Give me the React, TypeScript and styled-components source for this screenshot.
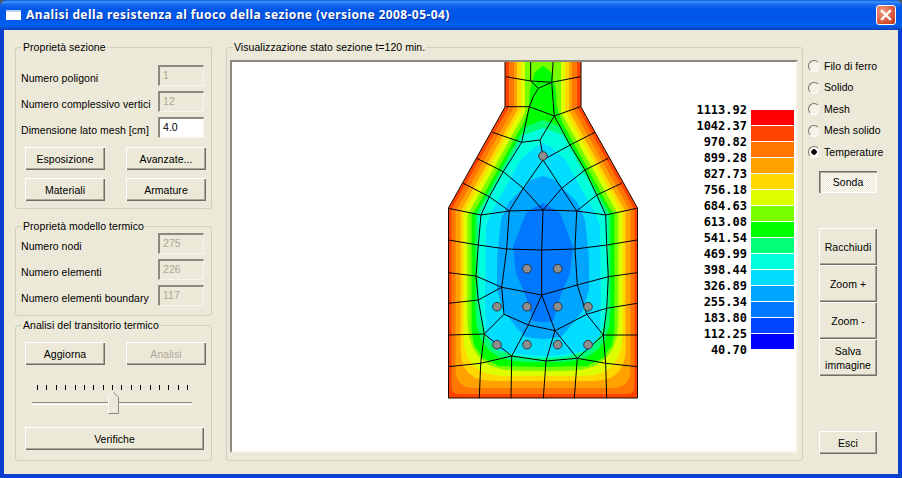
import React from "react";
import styled, { createGlobalStyle } from "styled-components";

const Global = createGlobalStyle`
  html, body { margin: 0; padding: 0; background: #4c5a6c; }
  #root { width: 902px; height: 478px; overflow: hidden; }
  * { box-sizing: border-box; }
`;

const UI_FONT = `"Liberation Sans", Arial, sans-serif`;

const Win = styled.div`
  width: 902px;
  height: 478px;
  display: flex;
  flex-direction: column;
  font: 10.5px/13px ${UI_FONT};
  letter-spacing: 0.05px;
  color: #000;
  background: #0a3fd0;
  border-radius: 7px 7px 0 0;
  overflow: hidden;
`;
const TitleBar = styled.div`
  height: 30px;
  flex: none;
  display: flex;
  align-items: center;
  padding: 0 6px 0 6px;
  background: linear-gradient(180deg, #0a5ae0 0, #3f95fb 2px, #1a6cf0 4px, #0058e8 9px, #0055e5 18px, #0060f0 25px, #0a4fd8 28px, #0a3cbc 30px);
`;
const TitleIcon = styled.div`
  width: 15px;
  height: 10px;
  background: #fff;
  border-top: 2px solid #bcd0f5;
  margin-right: 5px;
  flex: none;
`;
const TitleText = styled.div`
  flex: 1;
  font: bold 12px/16px "Noto Sans", "Liberation Sans", Arial, sans-serif;
  color: #fff;
  text-shadow: 1px 1px 0 #0a2f9c;
  letter-spacing: 0.4px;
  white-space: nowrap;
`;
const CloseBtn = styled.button`
  width: 20px;
  height: 20px;
  padding: 0;
  display: flex;
  align-items: center;
  justify-content: center;
  border: 1px solid #fff;
  border-radius: 3px;
  background: radial-gradient(circle at 30% 30%, #f0a080, #d8583a 60%, #b83010);
`;
const Body = styled.div`
  flex: 1;
  display: flex;
  background: #ece9d8;
  margin: 0 4px 4px 4px;
  padding: 17px 0 0 11px;
`;
const LeftCol = styled.div`
  width: 197px;
  flex: none;
  display: flex;
  flex-direction: column;
`;
const Group = styled.div<{ $h: number; $mt?: number; $pt: number }>`
  position: relative;
  height: ${(p) => p.$h}px;
  margin-top: ${(p) => p.$mt ?? 0}px;
  padding: ${(p) => p.$pt}px 7px 0 5px;
  border: 1px solid #d0d0bf;
  border-radius: 3px;
`;
const GroupTitle = styled.span`
  position: absolute;
  left: 6px;
  top: -7px;
  padding: 0 1px;
  background: #ece9d8;
  white-space: nowrap;
`;
const FieldRow = styled.div`
  display: flex;
  justify-content: space-between;
  height: 21px;
  margin-bottom: 5px;
`;
const FieldLabel = styled.label`
  padding-top: 7px;
  white-space: nowrap;
`;
const Field = styled.input`
  width: 46px;
  height: 21px;
  padding: 0 3px 3px 3px;
  font: 10.5px ${UI_FONT};
  letter-spacing: 0.05px;
  border: 1px solid;
  border-width: 2px 1px 1px 2px;
  border-color: #8c8a7e #f8f6ec #f8f6ec #8c8a7e;
  background: #fff;
  color: #000;
  outline: none;
  &:disabled {
    background: #ece9d8;
    color: #aca899;
    -webkit-text-fill-color: #aca899;
    opacity: 1;
  }
`;
const ButtonRow = styled.div<{ $mt: number }>`
  display: flex;
  gap: 21px;
  margin: ${(p) => p.$mt}px -3px 0 4px;
`;
const Btn = styled.button<{ $w: number; $h: number }>`
  width: ${(p) => p.$w}px;
  height: ${(p) => p.$h}px;
  flex: none;
  padding: 0;
  font: 10.5px/14px ${UI_FONT};
  letter-spacing: 0.05px;
  color: #000;
  background: #ece9d8;
  border: none;
  box-shadow: inset 1px 1px 0 #fff, inset -1px -1px 0 #716f64, inset -2px -2px 0 #aca899;
  &:disabled {
    color: #aca899;
  }
`;
const PressedBtn = styled(Btn)`
  background: repeating-conic-gradient(#ece9d8 0 25%, #fbfaf4 0 50%) 0 0 / 2px 2px;
  box-shadow: inset 1px 1px 0 #716f64, inset 2px 2px 0 #aca899, inset -1px -1px 0 #fff;
`;
const SliderBox = styled.div`
  position: relative;
  height: 33px;
  margin: 20px 0 0 11px;
  width: 160px;
`;
const Ticks = styled.div`
  display: flex;
  justify-content: space-between;
  padding: 0 4px 0 5px;
  height: 5px;
`;
const Tick = styled.i`
  width: 1px;
  height: 5px;
  background: #000;
`;
const Track = styled.div`
  position: absolute;
  left: 0;
  right: 0;
  top: 17px;
  height: 3px;
  background: #f4f2e6;
  border-top: 1px solid #8c8a7e;
  border-bottom: 1px solid #fff;
`;
const Thumb = styled.svg`
  position: absolute;
  left: 76px;
  top: 7px;
`;
const WideBtnWrap = styled.div`
  margin: 9px 0 0 4px;
`;
const MainGroup = styled.div`
  position: relative;
  width: 577px;
  height: 414px;
  margin-left: 14px;
  padding: 12px 3px 0 3px;
  border: 1px solid #d0d0bf;
  border-radius: 3px;
  flex: none;
`;
const Canvas = styled.div`
  width: 568px;
  height: 393px;
  display: flex;
  background: #fff;
  border: 2px solid;
  border-color: #8c8a7e #f4f2e6 #f4f2e6 #8c8a7e;
  overflow: hidden;
`;
const Section = styled.svg`
  flex: none;
  display: block;
`;
const Legend = styled.div`
  display: flex;
  gap: 4px;
  flex: none;
`;
const LegendLabels = styled.div`
  width: 57px;
  margin-top: 40px;
  text-align: right;
`;
const LegendLabel = styled.div`
  height: 16px;
  font: bold 12px/16px "DejaVu Sans Mono", "Liberation Mono", monospace;
  letter-spacing: 0;
`;
const LegendBars = styled.div`
  width: 43px;
  margin-top: 48px;
`;
const LegendBar = styled.div<{ $c: string }>`
  height: 15px;
  margin-bottom: 1px;
  background: ${(p) => p.$c};
`;
const RightCol = styled.div`
  flex: none;
  margin-left: 5px;
  width: 84px;
  display: flex;
  flex-direction: column;
  padding-top: 8.5px;
`;
const RadioRow = styled.div`
  height: 21.5px;
  display: flex;
  align-items: center;
  gap: 4px;
  white-space: nowrap;
`;
const RadioDot = styled.span<{ $on?: boolean }>`
  width: 12px;
  height: 12px;
  flex: none;
  border-radius: 50%;
  border: 1px solid;
  border-color: #77756a #f4f2e6 #fff #77756a;
  background: ${(p) => (p.$on ? "radial-gradient(circle, #000 0 2.5px, #fff 3px)" : "#f4f2e6")};
`;
const ToolStack = styled.div<{ $mt: number }>`
  display: flex;
  flex-direction: column;
  align-items: flex-start;
  margin: ${(p) => p.$mt}px 0 0 11px;
`;

const hw = (y: number) => 38 + (y - 107) * 0.5594;
const CX = 543;

function mirror(pts: number[][]) {
  const right = pts.map(([h, y]) => `${(CX + h).toFixed(1)},${y.toFixed(1)}`);
  const left = [...pts].reverse().map(([h, y]) => `${(CX - h).toFixed(1)},${y.toFixed(1)}`);
  return [...right, ...left].join(" ");
}

function corner(side: number, yb: number, c: number) {
  const out: number[][] = [];
  for (let i = 0; i <= 6; i++) {
    const u = i / 6;
    const w = (1 - u) * (1 - u);
    const m = 2 * u * (1 - u);
    const v = u * u;
    out.push([w * side + m * side + v * (side - c), w * (yb - c) + m * yb + v * yb]);
  }
  return out;
}

function neckBand(s: number, bt: number, n: number, t: number) {
  const h = 38 - n;
  const y1 = 107 + (t - n) / 0.5594;
  const y2 = 208 + (t - s) / 0.5594;
  const side = 94.5 - s;
  const yb = 398 - bt;
  const c = (s + bt) * 1.1;
  return mirror([[h, 58], [h, y1], [side, y2], ...corner(side, yb, c), [0, yb]]);
}

function coreBand(s: number, bt: number, t: number, apex: number) {
  const side = 94.5 - s;
  const y2 = 208 + (t - s) / 0.5594;
  const yb = 398 - bt;
  const c = (s + bt) * 0.8;
  return mirror([
    [0, apex],
    [Math.max(hw(apex + 7) - t, 8), apex + 7],
    [side, y2],
    ...corner(side, yb, c),
    [0, yb],
  ]);
}

const OUTLINE = mirror([
  [38, 58],
  [38, 107],
  [94.5, 208],
  [94.5, 398],
]);

const bands: { c: string; p: string }[] = [
  { c: "#ff4400", p: OUTLINE },
  { c: "#ff7700", p: neckBand(3, 4, 4, 4) },
  { c: "#ffa200", p: neckBand(7, 10, 9, 9) },
  { c: "#ffd800", p: neckBand(12, 17, 12, 14) },
  { c: "#ddff00", p: neckBand(15, 22, 16, 18) },
  { c: "#77ff00", p: neckBand(19, 27, 20, 23) },
  {
    c: "#00ff00",
    p: mirror([
      [0, 66],
      [8, 72],
      [13, 90],
      [14, 107],
      [19, 122],
      [66.5, 208],
      [71.5, 215],
      [71.5, 330],
      [69, 345],
      [60, 358],
      [44, 366],
      [0, 367],
    ]),
  },
  { c: "#00ff77", p: coreBand(27, 36, 31, 120) },
  { c: "#00ffdd", p: coreBand(30, 40, 34, 128) },
  {
    c: "#00ddff",
    p: mirror([
      [0, 143],
      [8, 147],
      [22.6, 160],
      [39, 190],
      [50.6, 210],
      [57, 225],
      [58, 300],
      [57, 335],
      [47, 350],
      [20, 355],
      [0, 356],
    ]),
  },
  {
    c: "#00a5ff",
    p: mirror([
      [0, 176],
      [12, 180],
      [22, 190],
      [34, 202],
      [42, 220],
      [46, 258],
      [46, 290],
      [40, 310],
      [27, 327],
      [18, 337],
      [0, 339],
    ]),
  },
  {
    c: "#0077ff",
    p: mirror([
      [0, 203],
      [6, 206],
      [17, 213],
      [30, 247],
      [27, 273],
      [17, 297],
      [10, 321],
      [0, 322],
    ]),
  },
];

const a = (x: number, y: number) => `${(440 + x / 3).toFixed(1)},${(55 + y / 3).toFixed(1)}`;
const b = (x: number, y: number) => `${(440 + x / 3).toFixed(1)},${(225 + y / 3).toFixed(1)}`;

const mesh: string[][] = [
  [a(197, 65), a(272, 78), a(335, 82), a(421, 65)],
  [a(272, 15), a(272, 78), a(295, 100), a(280, 125), a(268, 155)],
  [a(340, 15), a(335, 82), a(343, 183)],
  [a(335, 82), a(295, 100)],
  [a(197, 155), a(268, 155), a(343, 183), a(421, 155)],
  [a(268, 155), a(245, 262), a(190, 350), a(148, 425), a(123, 480), b(115, 60), b(108, 153), b(115, 225), b(133, 327), b(122, 415), b(118, 520)],
  [a(343, 183), a(300, 255), a(245, 262)],
  [a(300, 255), a(309, 303)],
  [a(157, 232), a(245, 262)],
  [a(465, 232), a(390, 270), a(309, 315), a(250, 400), a(208, 468), b(200, 72), b(185, 187), b(192, 268), b(133, 327)],
  [a(343, 183), a(390, 270), a(435, 345), a(470, 420), a(497, 480), b(500, 60), b(505, 155), b(500, 250), b(490, 330), b(497, 415), b(500, 520)],
  [a(110, 310), a(190, 350), a(250, 400), a(309, 465), b(305, 75), b(305, 210), b(265, 300), b(215, 393), b(213, 520)],
  [a(505, 310), a(435, 345), a(365, 400), a(309, 465)],
  [a(309, 315), a(365, 400), a(410, 468), b(405, 72), b(412, 180), b(440, 268), b(490, 330)],
  [a(70, 385), a(148, 425), a(208, 468)],
  [a(545, 385), a(470, 420), a(410, 468)],
  [a(25, 460), a(123, 480), a(208, 468), a(309, 465), a(410, 468), a(497, 480), a(590, 460)],
  [b(25, 45), b(115, 60), b(200, 72), b(305, 75), b(405, 72), b(500, 60), b(592, 45)],
  [b(25, 143), b(108, 153), b(185, 187), b(305, 210), b(412, 180), b(505, 155), b(592, 143)],
  [b(25, 235), b(115, 225), b(185, 187)],
  [b(192, 268), b(265, 300), b(345, 317), b(440, 268)],
  [b(305, 210), b(345, 317), b(318, 408), b(310, 520)],
  [b(345, 317), b(412, 400), b(403, 520)],
  [b(592, 235), b(500, 250), b(440, 268)],
  [b(25, 330), b(133, 327), b(215, 393), b(318, 408), b(412, 400), b(497, 415), b(592, 425)],
  [b(25, 425), b(122, 415), b(215, 393)],
  [b(592, 330), b(490, 330), b(412, 400)],
];

const rebars = [
  [543, 156],
  [527, 268.7],
  [557.7, 268.7],
  [497, 306.7],
  [527, 306.7],
  [557.7, 306.7],
  [588, 306.7],
  [497, 344.7],
  [527, 344.7],
  [557.7, 344.7],
  [588, 344.7],
];

const legendValues = ["1113.92", "1042.37", "970.82", "899.28", "827.73", "756.18", "684.63", "613.08", "541.54", "469.99", "398.44", "326.89", "255.34", "183.80", "112.25", "40.70"];
const legendColors = ["#ff0000", "#ff4400", "#ff7700", "#ffa200", "#ffd800", "#ddff00", "#77ff00", "#00ff00", "#00ff77", "#00ffdd", "#00ddff", "#00a5ff", "#0077ff", "#0044ff", "#0000ff"];

const Row = ({ label, value, disabled = true }: { label: string; value: string; disabled?: boolean }) => (
  <FieldRow>
    <FieldLabel>{label}</FieldLabel>
    <Field value={value} disabled={disabled} readOnly />
  </FieldRow>
);

export default function App() {
  return (
    <>
      <Global />
      <Win>
        <TitleBar>
          <TitleIcon />
          <TitleText>Analisi della resistenza al fuoco della sezione (versione 2008-05-04)</TitleText>
          <CloseBtn aria-label="Chiudi">
            <svg width="12" height="12" viewBox="0 0 12 12">
              <path d="M2 2 L10 10 M10 2 L2 10" stroke="#fff" strokeWidth="2.4" strokeLinecap="square" />
            </svg>
          </CloseBtn>
        </TitleBar>
        <Body>
          <LeftCol>
            <Group $h={162} $pt={17}>
              <GroupTitle>Proprietà sezione</GroupTitle>
              <Row label="Numero poligoni" value="1" />
              <Row label="Numero complessivo vertici" value="12" />
              <Row label="Dimensione lato mesh [cm]" value="4.0" disabled={false} />
              <ButtonRow $mt={9}>
                <Btn $w={80} $h={23}>Esposizione</Btn>
                <Btn $w={80} $h={23}>Avanzate...</Btn>
              </ButtonRow>
              <ButtonRow $mt={8}>
                <Btn $w={80} $h={23}>Materiali</Btn>
                <Btn $w={80} $h={23}>Armature</Btn>
              </ButtonRow>
            </Group>
            <Group $h={90} $mt={17} $pt={6}>
              <GroupTitle>Proprietà modello termico</GroupTitle>
              <Row label="Numero nodi" value="275" />
              <Row label="Numero elementi" value="226" />
              <Row label="Numero elementi boundary" value="117" />
            </Group>
            <Group $h={136} $mt={9} $pt={16}>
              <GroupTitle>Analisi del transitorio termico</GroupTitle>
              <ButtonRow $mt={0}>
                <Btn $w={80} $h={23}>Aggiorna</Btn>
                <Btn $w={80} $h={23} disabled>Analisi</Btn>
              </ButtonRow>
              <SliderBox>
                <Ticks>
                  {Array.from({ length: 17 }, (_, i) => (
                    <Tick key={i} />
                  ))}
                </Ticks>
                <Track />
                <Thumb width="11" height="22" viewBox="0 0 11 22">
                  <path d="M0.5 21.5 V5 L5.5 0.5 L10.5 5 V21.5 Z" fill="#ece9d8" stroke="#fff" />
                  <path d="M5.5 0.5 L10.5 5 V21.5 H0.5" fill="none" stroke="#8c8a7e" />
                </Thumb>
              </SliderBox>
              <WideBtnWrap>
                <Btn $w={179} $h={23}>Verifiche</Btn>
              </WideBtnWrap>
            </Group>
          </LeftCol>
          <MainGroup>
            <GroupTitle>Visualizzazione stato sezione t=120 min.</GroupTitle>
            <Canvas>
              <Section width="458" height="389" viewBox="232 62 458 389">
                {bands.map((band, i) => (
                  <polygon key={i} points={band.p} fill={band.c} />
                ))}
                {mesh.map((pts, i) => (
                  <polyline key={i} points={pts.join(" ")} fill="none" stroke="#000" strokeWidth="1" />
                ))}
                <polygon points={OUTLINE} fill="none" stroke="#1a0800" strokeWidth="1" />
                {rebars.map(([x, y], i) => (
                  <circle key={i} cx={x} cy={y} r="4.3" fill="#8e8e8e" stroke="#333" strokeWidth="1" />
                ))}
              </Section>
              <Legend>
                <LegendLabels>
                  {legendValues.map((v) => (
                    <LegendLabel key={v}>{v}</LegendLabel>
                  ))}
                </LegendLabels>
                <LegendBars>
                  {legendColors.map((c) => (
                    <LegendBar key={c} $c={c} />
                  ))}
                </LegendBars>
              </Legend>
            </Canvas>
          </MainGroup>
          <RightCol>
            <RadioRow><RadioDot />Filo di ferro</RadioRow>
            <RadioRow><RadioDot />Solido</RadioRow>
            <RadioRow><RadioDot />Mesh</RadioRow>
            <RadioRow><RadioDot />Mesh solido</RadioRow>
            <RadioRow><RadioDot $on />Temperature</RadioRow>
            <ToolStack $mt={8}>
              <PressedBtn $w={58} $h={22}>Sonda</PressedBtn>
            </ToolStack>
            <ToolStack $mt={35}>
              <Btn $w={58} $h={37}>Racchiudi</Btn>
              <Btn $w={58} $h={37}>Zoom +</Btn>
              <Btn $w={58} $h={37}>Zoom -</Btn>
              <Btn $w={58} $h={37}>Salva<br />immagine</Btn>
            </ToolStack>
            <ToolStack $mt={55}>
              <Btn $w={58} $h={23}>Esci</Btn>
            </ToolStack>
          </RightCol>
        </Body>
      </Win>
    </>
  );
}
